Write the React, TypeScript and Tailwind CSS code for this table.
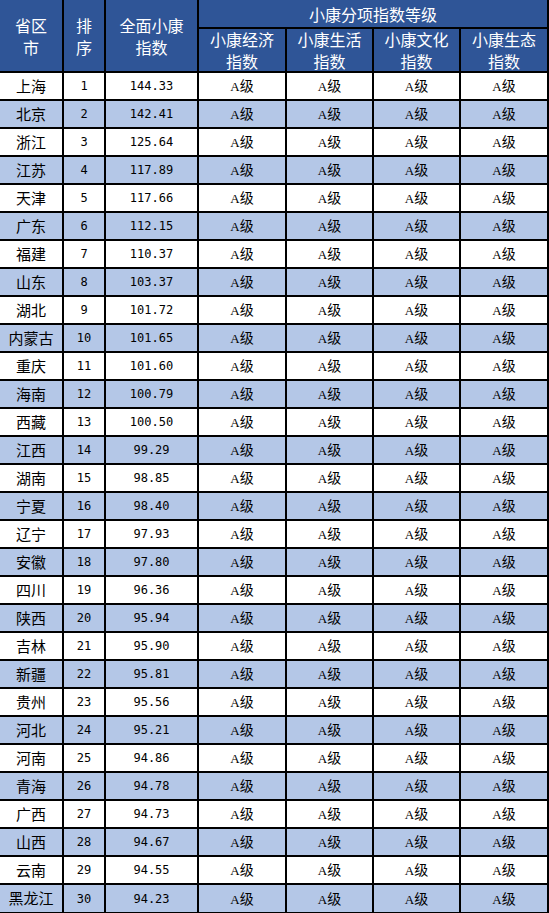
const rows: [string, number, string][] = [
  ['上海', 1, '144.33'],
  ['北京', 2, '142.41'],
  ['浙江', 3, '125.64'],
  ['江苏', 4, '117.89'],
  ['天津', 5, '117.66'],
  ['广东', 6, '112.15'],
  ['福建', 7, '110.37'],
  ['山东', 8, '103.37'],
  ['湖北', 9, '101.72'],
  ['内蒙古', 10, '101.65'],
  ['重庆', 11, '101.60'],
  ['海南', 12, '100.79'],
  ['西藏', 13, '100.50'],
  ['江西', 14, '99.29'],
  ['湖南', 15, '98.85'],
  ['宁夏', 16, '98.40'],
  ['辽宁', 17, '97.93'],
  ['安徽', 18, '97.80'],
  ['四川', 19, '96.36'],
  ['陕西', 20, '95.94'],
  ['吉林', 21, '95.90'],
  ['新疆', 22, '95.81'],
  ['贵州', 23, '95.56'],
  ['河北', 24, '95.21'],
  ['河南', 25, '94.86'],
  ['青海', 26, '94.78'],
  ['广西', 27, '94.73'],
  ['山西', 28, '94.67'],
  ['云南', 29, '94.55'],
  ['黑龙江', 30, '94.23'],
]

const cjk = "font-['Noto_Sans_CJK_SC',sans-serif]"
const mono = "font-['DejaVu_Sans_Mono',monospace]"

function Grade() {
  return (
    <span className={`${cjk} text-[14px] text-black`}>
      <span className="font-['Liberation_Serif',serif] text-[13px]">A</span>级
    </span>
  )
}

export default function App() {
  return (
    <main className="min-h-screen bg-white">
      <div className="grid w-[549px] grid-cols-[62px_40px_91px_86px_85px_85px_86px] grid-rows-[27px_42px_repeat(29,26px)_27px] gap-[2px] bg-black pb-[1px] pr-[2px]">
        {/* header */}
        <div className={`row-span-2 flex items-center justify-center bg-[#2f5597] text-center text-[16px] leading-[22px] text-white ${cjk}`}>
          省区<br />市
        </div>
        <div className={`row-span-2 flex items-center justify-center bg-[#2f5597] text-center text-[16px] leading-[22px] text-white ${cjk}`}>
          排<br />序
        </div>
        <div className={`row-span-2 flex items-center justify-center bg-[#2f5597] text-center text-[16px] leading-[22px] text-white ${cjk}`}>
          全面小康<br />指数
        </div>
        <div className={`col-span-4 flex items-center justify-center bg-[#2f5597] text-[16px] text-white ${cjk}`}>
          小康分项指数等级
        </div>
        {['小康经济', '小康生活', '小康文化', '小康生态'].map((h) => (
          <div
            key={h}
            className={`flex items-center justify-center bg-[#2f5597] text-center text-[16px] leading-[22px] text-white ${cjk}`}
          >
            {h}<br />指数
          </div>
        ))}

        {/* body */}
        {rows.map(([name, rank, score], i) => {
          const bg = i % 2 === 0 ? 'bg-white' : 'bg-[#b4c7e7]'
          return [
            <div key={`${rank}-n`} className={`flex items-center justify-center ${bg} ${cjk} text-[15px] text-black`}>
              {name}
            </div>,
            <div key={`${rank}-r`} className={`flex items-center justify-center ${bg} ${mono} text-[12px] text-black`}>
              {rank}
            </div>,
            <div key={`${rank}-s`} className={`flex items-center justify-center ${bg} ${mono} text-[12px] text-black`}>
              {score}
            </div>,
            ...[0, 1, 2, 3].map((c) => (
              <div key={`${rank}-g${c}`} className={`flex items-center justify-center ${bg}`}>
                <Grade />
              </div>
            )),
          ]
        })}
      </div>
    </main>
  )
}
